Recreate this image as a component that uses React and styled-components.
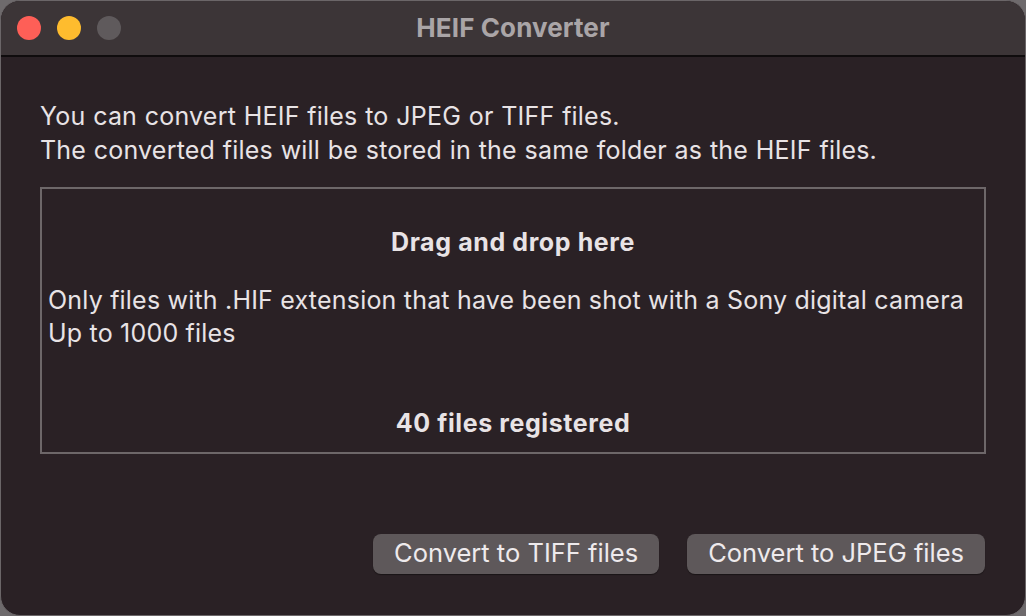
import styled, { createGlobalStyle } from 'styled-components'

const GlobalStyle = createGlobalStyle`
  html, body {
    margin: 0;
    padding: 0;
    background: #6e6a6c;
  }
  body {
    font-family: Inter, "Noto Sans", "Liberation Sans", sans-serif;
    -webkit-font-smoothing: antialiased;
  }
`

const Window = styled.div`
  width: 1026px;
  height: 616px;
  box-sizing: border-box;
  border: 1px solid #6b6668;
  border-radius: 20px;
  overflow: hidden;
  background: #2a2125;
  display: flex;
  flex-direction: column;
`

const TitleBar = styled.div`
  height: 56px;
  flex: none;
  box-sizing: border-box;
  background: #3c3537;
  border-bottom: 2px solid #0f0c0d;
  display: grid;
  grid-template-columns: 1fr auto 1fr;
  align-items: center;
  padding: 0 16px 1px 16px;
`

const Lights = styled.div`
  display: flex;
  gap: 16px;
  padding-top: 1px;
`

const Light = styled.span`
  width: 24px;
  height: 24px;
  border-radius: 50%;
  background: ${p => p.color};
`

const Title = styled.div`
  font-size: 26px;
  font-weight: 700;
  color: #aaa5a7;
  letter-spacing: 0.1px;
`

const Body = styled.div`
  flex: 1;
  display: flex;
  flex-direction: column;
  padding: 42px 39px 0 39px;
  color: #e8e3e5;
`

const Intro = styled.p`
  margin: 0;
  font-size: 25px;
  line-height: 34px;
  letter-spacing: 0.2px;
  word-spacing: 0.5px;
`

const DropZone = styled.div`
  margin-top: 20px;
  height: 267px;
  box-sizing: border-box;
  border: 2px solid #6d6769;
  display: flex;
  flex-direction: column;
  padding: 37px 6px 0 6px;
  font-size: 25px;
  line-height: 33px;
  letter-spacing: 0.2px;
`

const Strong = styled.div`
  font-weight: 700;
  text-align: center;
  letter-spacing: 0.6px;
`

const Info = styled.div`
  margin-top: 25px;
  white-space: nowrap;
`

const Count = styled(Strong)`
  margin-top: 57px;
`

const Actions = styled.div`
  margin-top: 80px;
  display: flex;
  justify-content: flex-end;
  gap: 28px;
  padding-right: 1px;
`

const Button = styled.button`
  height: 40px;
  padding: 0 21px 3px 21px;
  border: none;
  border-radius: 8px;
  background: #5e585a;
  color: #eeeaec;
  font-family: inherit;
  font-size: 25.5px;
  box-shadow: 0 1px 1px rgba(0, 0, 0, 0.4);
`

export default function App() {
  return (
    <>
      <GlobalStyle />
      <Window>
        <TitleBar>
          <Lights>
            <Light color="#fe5f57" />
            <Light color="#febc2e" />
            <Light color="#5f5a5c" />
          </Lights>
          <Title>HEIF Converter</Title>
          <span />
        </TitleBar>
        <Body>
          <Intro>
            You can convert HEIF files to JPEG or TIFF files.<br />
            The converted files will be stored in the same folder as the HEIF files.
          </Intro>
          <DropZone>
            <Strong>Drag and drop here</Strong>
            <Info>
              Only files with .HIF extension that have been shot with a Sony digital camera<br />
              Up to 1000 files
            </Info>
            <Count>40 files registered</Count>
          </DropZone>
          <Actions>
            <Button>Convert to TIFF files</Button>
            <Button>Convert to JPEG files</Button>
          </Actions>
        </Body>
      </Window>
    </>
  )
}
